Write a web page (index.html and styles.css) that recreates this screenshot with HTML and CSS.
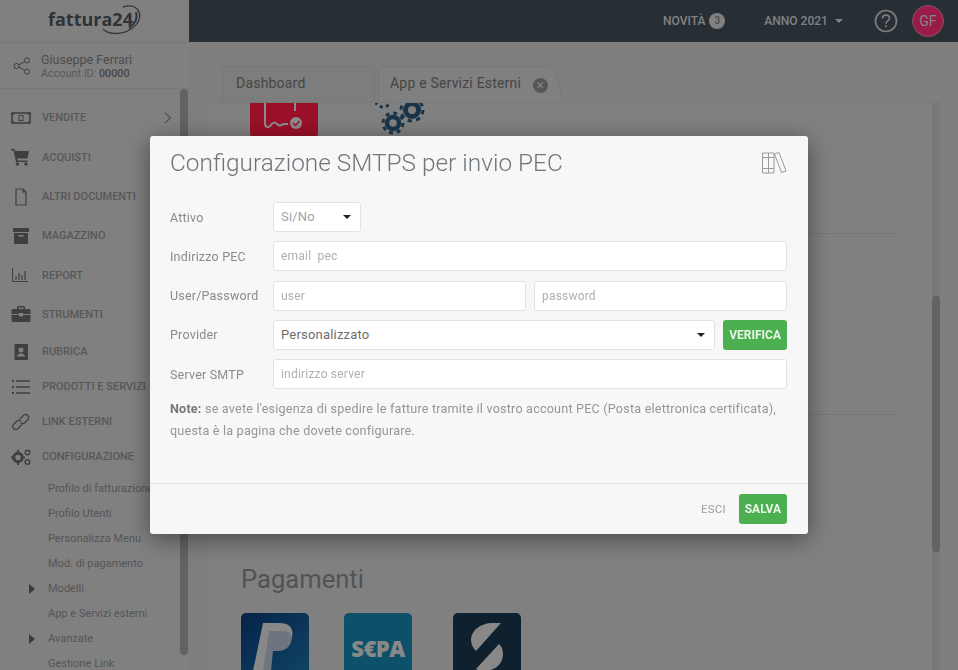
FILE: index.html
```html
<!DOCTYPE html>
<html lang="it">
<head>
  <meta charset="UTF-8">
  <title>Fattura24 - Configurazione SMTPS</title>
  <link rel="stylesheet" href="styles.css">
</head>
<body>
  <aside class="sidebar">
    <div class="logo">
      <span class="logo-text">fattura24</span>
      <svg class="logo-swoosh" width="48" height="32" viewBox="0 0 48 32" fill="none" stroke="#565f68" stroke-width="1.4">
        <path d="M8 25c6 6 19 6 28 0 8-5 11-13 7-19-3-4-9-5-15-3"/>
        <path d="M41 8c2 6-1 12-7 16" stroke-width="2.2"/>
      </svg>
    </div>
    <div class="user">
      <svg width="18" height="18" viewBox="0 0 20 20" fill="none" stroke="#666" stroke-width="1.1">
        <circle cx="4" cy="10" r="2.8"/><circle cx="15.5" cy="3.8" r="2.8"/><circle cx="15.5" cy="16.2" r="2.8"/>
        <path d="M6.5 8.7l6.5-3.6M6.5 11.3l6.5 3.6"/>
      </svg>
      <div>
        <div class="user-name">Giuseppe Ferrari</div>
        <div class="user-id">Account ID: <b>00000</b></div>
      </div>
    </div>
    <nav class="nav">
      <a class="nav-item">
        <svg width="20" height="14" viewBox="0 0 20 14"><rect x="1" y="2" width="18" height="10" fill="none" stroke="currentColor" stroke-width="1.6"/><path d="M1 2h3l-3 3zM19 2h-3l3 3zM1 12h3l-3-3zM19 12h-3l3-3z"/><rect x="8" y="4.5" width="4" height="5" fill="none" stroke="currentColor"/></svg>
        <span>Vendite</span>
        <svg class="chev" width="8" height="12" viewBox="0 0 8 12" fill="none" stroke="currentColor" stroke-width="1.1"><path d="M1 1l5.5 5L1 11"/></svg>
      </a>
      <a class="nav-item">
        <svg width="20" height="18" viewBox="0 0 20 18"><path d="M0 1h3.5l.8 2H18l-1.6 7.5H6l.5 2h10V14H5L2.5 2.500H0z"/><circle cx="6.5" cy="16" r="1.7"/><circle cx="15" cy="16" r="1.7"/></svg>
        <span>Acquisti</span>
      </a>
      <a class="nav-item">
        <svg width="20" height="18" viewBox="0 0 20 18" fill="none" stroke="currentColor" stroke-width="1.2"><path d="M5 1h7l3 3v13H5zM12 1v3h3"/></svg>
        <span>Altri documenti</span>
      </a>
      <a class="nav-item">
        <svg width="20" height="16" viewBox="0 0 20 16"><rect x="2" y="0" width="16" height="4"/><path d="M3 5h14v11H3zM7.5 7v1.5h5V7z" fill-rule="evenodd"/></svg>
        <span>Magazzino</span>
      </a>
      <a class="nav-item">
        <svg width="20" height="16" viewBox="0 0 20 16" fill="none" stroke="currentColor"><path d="M1.5 1v13.5H17"/><path d="M5 13V9M8 13V6M11 13V8M14 13V4" stroke-width="1.2"/></svg>
        <span>Report</span>
      </a>
      <a class="nav-item">
        <svg width="20" height="16" viewBox="0 0 20 16"><path d="M7 0h6l1 1v2h4.5l1 1v4H12V7H8v1H.5V4l1-1H6V1zm.5 1.5V3h5V1.5zM.5 9H8v1.500h4V9h7.5v6l-1 1h-17l-1-1z" fill-rule="evenodd"/></svg>
        <span>Strumenti</span>
      </a>
      <a class="nav-item compact">
        <svg width="20" height="16" viewBox="0 0 20 16"><path d="M4.5 0h11A1 1 0 0 1 17 1v14a1 1 0 0 1-1 1H4.5a1 1 0 0 1-1-1V1a1 1 0 0 1 1-1zM10 3.5a2.5 2.5 0 1 0 0 5 2.5 2.5 0 0 0 0-5zM6 12.5h8c0-2-2-3-4-3s-4 1-4 3z" fill-rule="evenodd"/></svg>
        <span>Rubrica</span>
      </a>
      <a class="nav-item compact">
        <svg width="20" height="14" viewBox="0 0 20 14"><path d="M1 0h2v2H1zM5 .3h14v1.400H5zM1 6h2v2H1zM5 6.3h14v1.400H5zM1 12h2v2H1zM5 12.3h14v1.400H5z"/></svg>
        <span>Prodotti e servizi</span>
      </a>
      <a class="nav-item compact">
        <svg width="20" height="18" viewBox="0 0 20 18" fill="none" stroke="currentColor" stroke-width="1.3"><path d="M8.5 6.5l4-4a3 3 0 0 1 4.300 4.300l-3 3a3 3 0 0 1-4.300 0"/><path d="M11 11.5l-4 4a3 3 0 0 1-4.300-4.300l3-3a3 3 0 0 1 4.300 0"/></svg>
        <span>Link esterni</span>
      </a>
      <a class="nav-item compact">
        <svg width="20" height="16" viewBox="0 0 20 16"><circle cx="7" cy="8.5" r="4.200" fill="none" stroke="currentColor" stroke-width="3"/><path d="M6 1h2v3H6zM6 13h2v3H6zM0 7.5h3v2H0zM11 7.5h3v2h-3z"/><circle cx="16.5" cy="3.5" r="2.300" fill="none" stroke="currentColor" stroke-width="1.4"/><circle cx="16.5" cy="13" r="2.300" fill="none" stroke="currentColor" stroke-width="1.4"/></svg>
        <span>Configurazione</span>
      </a>
    </nav>
    <ul class="subnav">
      <li>Profilo di fatturazione</li>
      <li>Profilo Utenti</li>
      <li>Personalizza Menu</li>
      <li>Mod. di pagamento</li>
      <li class="has-arrow">Modelli</li>
      <li>App e Servizi esterni</li>
      <li class="has-arrow">Avanzate</li>
      <li>Gestione Link</li>
    </ul>
    <div class="sidebar-scroll"></div>
  </aside>

  <div class="main">
    <header class="topbar">
      <span class="top-link">Novità <i class="badge">3</i></span>
      <span class="top-link year">Anno 2021 <i class="caret"></i></span>
      <svg class="help" width="24" height="24" viewBox="0 0 24 24" fill="none" stroke="#cfcfcf" stroke-width="1.7">
        <circle cx="12" cy="12" r="10.5"/>
        <path d="M8.5 9.5c0-2 1.600-3.300 3.500-3.300s3.500 1.200 3.500 3.100c0 2.700-3.500 2.600-3.500 5.400"/>
        <path d="M12 16.300v2"/>
      </svg>
      <span class="avatar">GF</span>
    </header>

    <div class="workspace">
      <div class="tabs">
        <div class="tab">Dashboard</div>
        <div class="tab tab-active">App e Servizi Esterni <i class="tab-close">&times;</i></div>
      </div>
      <div class="panel">
        <div class="panel-top">
          <div class="tile tile-red">
            <svg width="68" height="34" viewBox="0 0 68 34" fill="none" stroke="#e8e8e8" stroke-width="2">
              <path d="M15 0v20c0 5 4 5 6 2s4-3 6-1 4 2 6 0h5"/>
              <path d="M45 0v8"/>
              <circle cx="46" cy="20" r="6" fill="#e8e8e8" stroke="none"/>
              <path d="M43 20l2.500 2.500 4-4.500" stroke="#ff1a44" stroke-width="1.5"/>
            </svg>
          </div>
          <svg class="gears" width="54" height="34" viewBox="0 0 54 34" fill="none" stroke="#2a5878">
            <circle cx="18" cy="20" r="6" stroke-width="4.5"/>
            <circle cx="18" cy="20" r="10" stroke-width="3" stroke-dasharray="3.9 3.95"/>
            <circle cx="37" cy="7" r="6.5" stroke-width="5"/>
            <circle cx="37" cy="7" r="11" stroke-width="3" stroke-dasharray="4.3 4.34"/>
            <circle cx="8" cy="-4" r="8" stroke-width="3" stroke-dasharray="3.2 3.1"/>
          </svg>
        </div>
        <div class="panel-line line-one"></div>
        <div class="panel-line line-two"></div>
        <h2 class="section-title">Pagamenti</h2>
        <div class="tile-row">
          <div class="tile tile-paypal">
            <svg width="68" height="58" viewBox="0 0 68 58">
              <path d="M22 10h17c9 0 14 5 12 14-2 8-8 12-16 12h-7l-3 22H12z" fill="#e3e3e3"/>
              <path d="M28 18h14c7 0 10 4 8 11-2 6-7 9-13 9h-5l-2 20h-8z" fill="#b9c4d2"/>
            </svg>
          </div>
          <div class="tile tile-sepa">S€PA</div>
          <div class="tile tile-satispay">
            <svg width="68" height="58" viewBox="0 0 68 58">
              <path d="M40 10h8L23 38c-3-3-5-7-5-11 0-9 9-17 22-17z" fill="#e3e3e3"/>
              <path d="M30 58c-4 0-7-2-7-2l23-25c3 3 4 6 4 10 0 10-8 17-20 17z" fill="#e3e3e3"/>
            </svg>
          </div>
        </div>
      </div>
      <div class="main-scroll"></div>
    </div>
  </div>

  <div class="backdrop"></div>

  <div class="modal">
    <div class="modal-head">
      <h1>Configurazione SMTPS per invio PEC</h1>
      <svg width="26" height="24" viewBox="0 0 26 24" fill="none" stroke="#9a9a9a" stroke-width="1">
        <path d="M1.5 2h6v20h-6zM7.5 2H13v20H7.5zM1.5 6.5H13M1.5 17.5H13"/>
        <path d="M13.5 3L18 1.5 25 20l-4.500 1.500z"/>
      </svg>
    </div>
    <form class="modal-body">
      <div class="field">
        <label>Attivo</label>
        <div class="select select-small">Si/No</div>
      </div>
      <div class="field">
        <label>Indirizzo PEC</label>
        <input class="input" placeholder="email  pec">
      </div>
      <div class="field">
        <label>User/Password</label>
        <input class="input" placeholder="user">
        <input class="input" placeholder="password">
      </div>
      <div class="field">
        <label>Provider</label>
        <div class="select select-wide">Personalizzato</div>
        <button type="button" class="btn">Verifica</button>
      </div>
      <div class="field">
        <label>Server SMTP</label>
        <input class="input" placeholder="indirizzo server">
      </div>
      <p class="note"><b>Note:</b> se avete l'esigenza di spedire le fatture tramite il vostro account PEC (Posta elettronica certificata), questa è la pagina che dovete configurare.</p>
    </form>
    <div class="modal-foot">
      <span class="exit">Esci</span>
      <button type="button" class="btn">Salva</button>
    </div>
  </div>
</body>
</html>
```

FILE: styles.css
```css
* {
  box-sizing: border-box;
}

html, body {
  margin: 0;
  height: 670px;
  overflow: hidden;
}

body {
  display: flex;
  font-family: Roboto, sans-serif;
  background: #d0d0d0;
}

/* sidebar */
.sidebar {
  position: relative;
  width: 189px;
  flex: none;
  height: 670px;
  overflow: hidden;
  background: #d6d6d6;
  color: #7d7d7d;
}

.logo {
  position: relative;
  height: 42px;
  padding: 4px 0 0 48px;
}

.logo-text {
  font-family: "Open Sans", sans-serif;
  font-size: 18px;
  font-weight: 700;
  line-height: 30px;
  color: #4e5660;
}

.logo-swoosh {
  position: absolute;
  left: 95px;
  top: 4px;
}

.user {
  height: 47px;
  padding: 1px 0 0 13px;
  display: flex;
  align-items: center;
  gap: 10px;
  border-top: 1px solid #c6c6c6;
  border-bottom: 1px solid #c6c6c6;
}

.user-name {
  font-size: 12.5px;
  line-height: 15px;
  color: #808080;
}

.user-id {
  font-size: 10.8px;
  line-height: 14px;
  color: #959595;
}

.user-id b {
  font-weight: 500;
  color: #757575;
}

.nav {
  padding-top: 9.3px;
}

.nav-item {
  height: 39.3px;
  display: flex;
  align-items: center;
  padding-left: 11px;
  position: relative;
  color: #6a6a6a;
  fill: currentColor;
}

.nav-item.compact {
  height: 35px;
}

.nav-item span {
  margin-left: 11px;
  font-size: 11px;
  font-weight: 500;
  text-transform: uppercase;
  color: #929292;
  white-space: nowrap;
}

.chev {
  position: absolute;
  left: 164px;
  top: 14px;
  color: #868686;
}

.subnav {
  list-style: none;
  margin: 2px 0 0;
  padding: 0 0 0 48px;
}

.subnav li {
  position: relative;
  height: 25px;
  line-height: 25px;
  font-size: 11px;
  color: #8e8e8e;
  white-space: nowrap;
}

.has-arrow::before {
  content: "";
  position: absolute;
  left: -19px;
  top: 8px;
  border-left: 6px solid #5f5f5f;
  border-top: 5px solid transparent;
  border-bottom: 5px solid transparent;
}

.sidebar-scroll {
  position: absolute;
  left: 180px;
  top: 89px;
  width: 8px;
  height: 566px;
  border-radius: 4px;
  background: #a4a4a4;
}

/* top bar and page */
.main {
  flex: 1;
  min-width: 0;
  display: flex;
  flex-direction: column;
}

.topbar {
  height: 42px;
  flex: none;
  display: flex;
  align-items: center;
  background: #414d58;
  padding-left: 474px;
  color: #d8d8d8;
}

.top-link {
  font-size: 12px;
  font-weight: 500;
  text-transform: uppercase;
  display: flex;
  align-items: center;
  gap: 4px;
}

.badge {
  width: 16px;
  height: 16px;
  border-radius: 50%;
  background: #d8d8d8;
  color: #7a7a7a;
  font-style: normal;
  font-size: 10px;
  line-height: 16px;
  text-align: center;
}

.year {
  margin-left: 39px;
  gap: 7px;
}

.caret {
  border-top: 4px solid #d8d8d8;
  border-left: 4.5px solid transparent;
  border-right: 4.5px solid transparent;
}

.help {
  margin-left: 31px;
}

.avatar {
  width: 32px;
  height: 32px;
  margin-left: 14px;
  border-radius: 50%;
  background: #ff3078;
  border: 1px solid #e58aa8;
  color: #dcdcdc;
  font-size: 14px;
  line-height: 30px;
  text-align: center;
}

.workspace {
  position: relative;
  flex: 1;
  min-height: 0;
  padding-left: 17px;
  background: #d2d2d2;
}

.tabs {
  display: flex;
  gap: 3px;
  height: 60px;
  padding: 24px 0 0 16px;
}

.tab {
  width: 153px;
  height: 36px;
  padding: 7px 0 0 13px;
  border: 1px solid #c6c6c6;
  border-bottom: 0;
  border-radius: 6px 6px 0 0;
  background: #d0d0d0;
  color: #757575;
  font-size: 14px;
  letter-spacing: 0.2px;
  line-height: 18px;
}

.tab-active {
  width: 184px;
  padding-left: 11px;
  background: #d6d6d6;
  border-top-right-radius: 16px 36px;
  white-space: nowrap;
}

.tab-close {
  display: inline-block;
  width: 15px;
  height: 15px;
  margin-left: 8px;
  border-radius: 50%;
  background: #8f8f8f;
  color: #d6d6d6;
  font-style: normal;
  font-size: 14px;
  line-height: 14px;
  text-align: center;
  vertical-align: -2px;
}

.panel {
  position: relative;
  width: 734px;
  height: 568px;
  padding-left: 34px;
  background: #d6d6d6;
  border: 1px solid #c8c8c8;
  border-bottom: 0;
}

.panel-top {
  display: flex;
  gap: 57px;
  height: 461px;
  padding-left: 9px;
}

.tile {
  width: 68px;
  border-radius: 0 0 4px 4px;
}

.tile-red {
  height: 34px;
  background: #ff1a44;
}

.panel-line {
  position: absolute;
  left: 36px;
  right: 43px;
  height: 1px;
  background: #c6c6c6;
}

.line-one {
  top: 130px;
}

.line-two {
  top: 311px;
}

.section-title {
  margin: 0;
  height: 49px;
  font-size: 25.6px;
  font-weight: 400;
  line-height: 30px;
  color: #8a8a8a;
}

.tile-row {
  display: flex;
  gap: 35px;
}

.tile-row .tile {
  height: 58px;
  border-radius: 5px 5px 0 0;
}

.tile-row .tile + .tile + .tile {
  margin-left: 6px;
}

.tile-paypal {
  background: linear-gradient(135deg, #0a3a7a, #1c70a8);
}

.tile-sepa {
  background: #1488b0;
  color: #e3e3e3;
  font-family: "Open Sans", sans-serif;
  font-size: 22px;
  font-weight: 800;
  letter-spacing: -0.5px;
  line-height: 70px;
  text-align: center;
}

.tile-satispay {
  background: #19384e;
}

.main-scroll {
  position: absolute;
  left: 743px;
  top: 60px;
  width: 8px;
  height: 568px;
  background: #c8c8c8;
}

.main-scroll::after {
  content: "";
  position: absolute;
  left: 0;
  top: 194px;
  width: 8px;
  height: 256px;
  border-radius: 4px;
  background: #a6a6a6;
}

/* modal */
.backdrop {
  position: fixed;
  inset: 0;
  background: rgba(0, 0, 0, 0.4);
}

.modal {
  position: fixed;
  left: 150px;
  top: 136px;
  width: 658px;
  height: 398px;
  display: flex;
  flex-direction: column;
  background: #f7f7f7;
  border-radius: 3px;
  box-shadow: 0 5px 24px rgba(0, 0, 0, 0.45);
  color: #8a8a8a;
  letter-spacing: 0.2px;
}

.modal-head {
  height: 58px;
  padding: 0 21px 5px 20px;
  display: flex;
  align-items: center;
  justify-content: space-between;
}

.modal-head h1 {
  margin: 0;
  font-size: 24.4px;
  font-weight: 300;
  letter-spacing: 0;
  color: #70767b;
}

.modal-body {
  flex: 1;
  margin: 0;
  padding: 8px 21px 0 20px;
  display: flex;
  flex-direction: column;
  gap: 9.3px;
}

.field {
  display: flex;
  gap: 8px;
  height: 30px;
  align-items: center;
}

.field label {
  width: 95px;
  flex: none;
  font-size: 12.5px;
}

.input,
.select {
  height: 30px;
  flex: 1;
  min-width: 0;
  padding: 0 7px;
  border: 1px solid #e2e2e2;
  border-radius: 3px;
  background: #fff;
  font-family: Roboto, sans-serif;
  font-size: 12px;
  outline: 0;
  letter-spacing: 0.2px;
}

.input::placeholder {
  color: #b0b0b0;
  opacity: 1;
}

.select {
  position: relative;
  line-height: 28px;
  font-size: 13px;
  color: #6e6e6e;
}

.select::after {
  content: "";
  position: absolute;
  right: 9px;
  top: 12px;
  border-top: 4px solid #222;
  border-left: 4px solid transparent;
  border-right: 4px solid transparent;
}

.select-small {
  flex: none;
  width: 88px;
  color: #a4a4a4;
}

.btn {
  height: 30px;
  padding: 0 6px;
  flex: none;
  border: 0;
  border-radius: 3px;
  background: #4caf50;
  color: #e8f5e9;
  font-family: Roboto, sans-serif;
  font-size: 12px;
  font-weight: 700;
  text-transform: uppercase;
}

.note {
  margin: 0;
  font-size: 12.6px;
  line-height: 21.5px;
  color: #969696;
}

.note b {
  color: #777;
}

.modal-foot {
  height: 51px;
  flex: none;
  padding: 0 21px 0 20px;
  display: flex;
  align-items: center;
  justify-content: flex-end;
  gap: 13px;
  border-top: 1px solid #e4e4e4;
}

.exit {
  font-size: 11.5px;
  text-transform: uppercase;
  color: #a0a0a0;
}
```
